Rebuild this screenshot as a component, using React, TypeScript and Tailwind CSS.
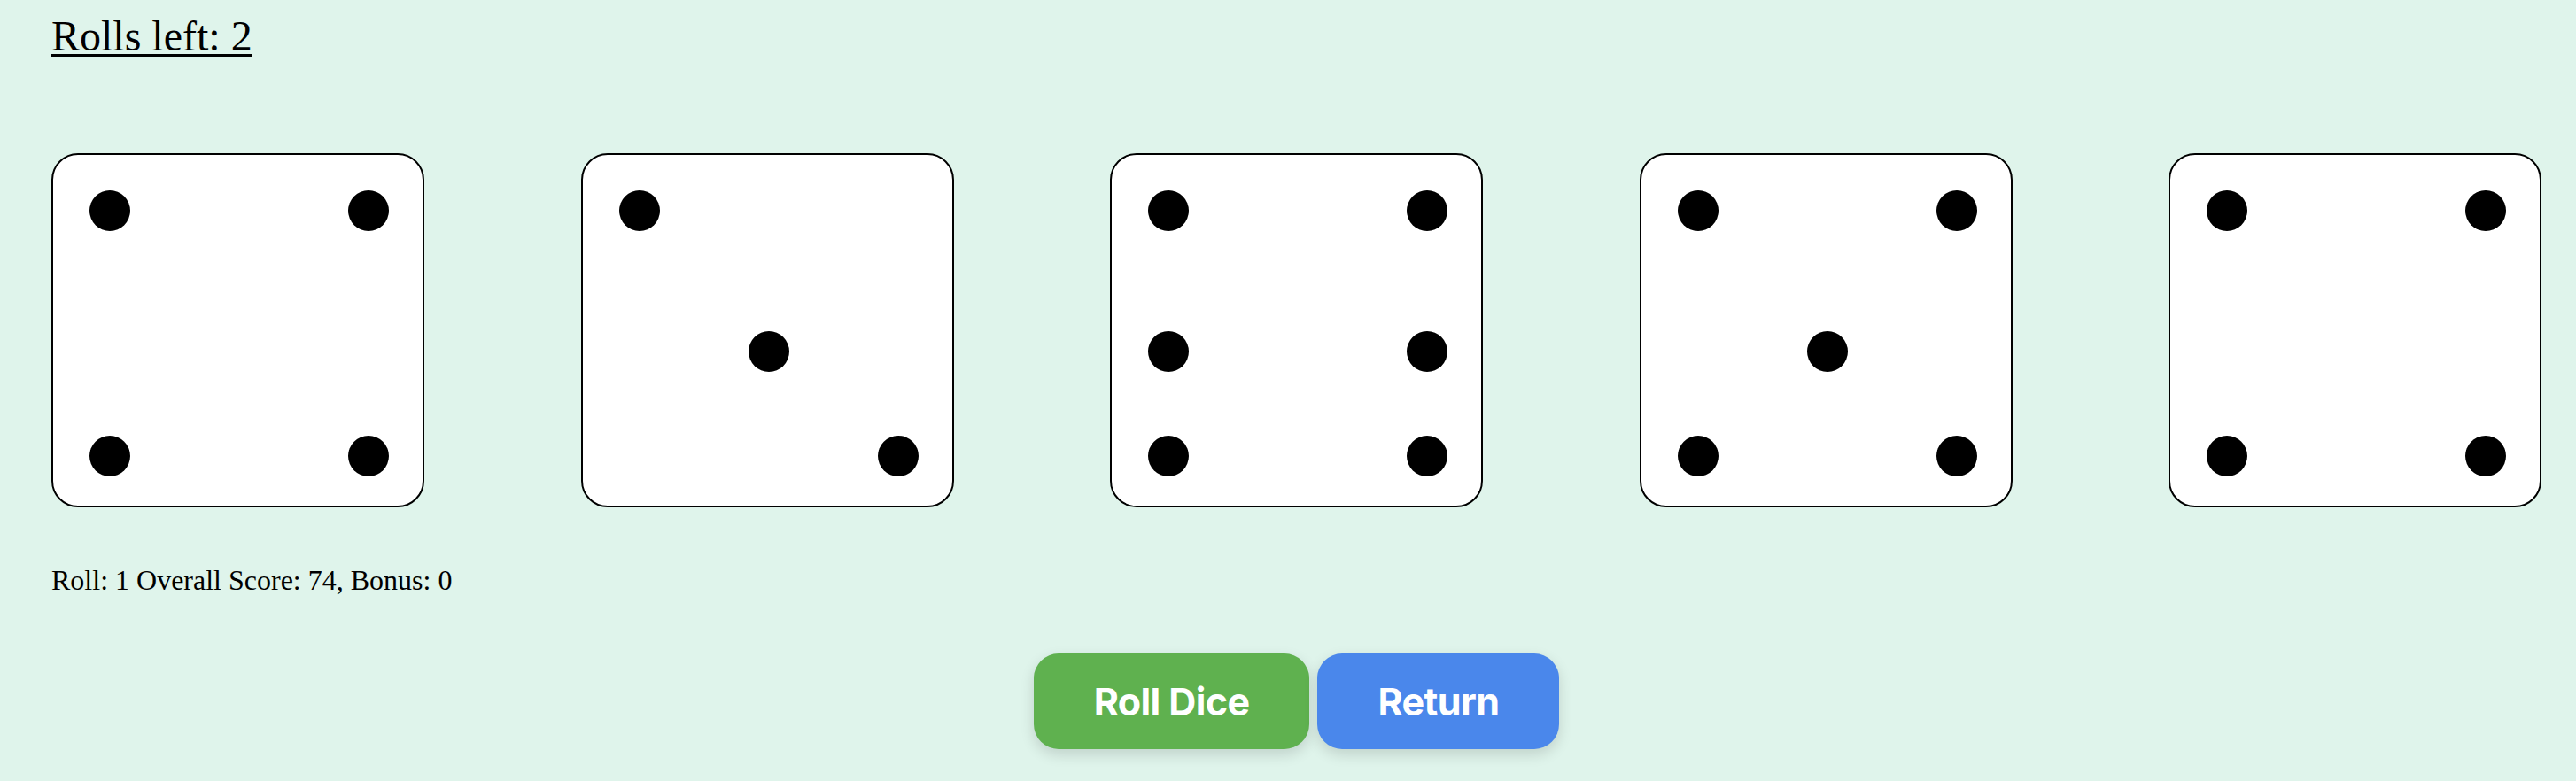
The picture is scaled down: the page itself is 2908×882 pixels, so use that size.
import React from "react";

type Slot = [boolean, boolean, boolean];
type Face = [Slot, Slot, Slot];

const FACES: Record<number, Face> = {
  3: [
    [true, false, false],
    [false, true, false],
    [false, false, true],
  ],
  4: [
    [true, false, true],
    [false, false, false],
    [true, false, true],
  ],
  5: [
    [true, false, true],
    [false, true, false],
    [true, false, true],
  ],
  6: [
    [true, false, true],
    [true, false, true],
    [true, false, true],
  ],
};

function Dot({ on }: { on: boolean }) {
  return (
    <div
      className={
        on
          ? "w-[46px] h-[46px] rounded-full bg-black"
          : "w-[46px] h-[46px]"
      }
    />
  );
}

function Row({ slots, className }: { slots: Slot; className: string }) {
  return (
    <div className={"flex h-[46px] justify-between " + className}>
      <Dot on={slots[0]} />
      <Dot on={slots[1]} />
      <Dot on={slots[2]} />
    </div>
  );
}

function Die({ value }: { value: number }) {
  const f = FACES[value];
  return (
    <div className="w-[421px] h-[400px] box-border border-2 border-black rounded-[30px] bg-white flex flex-col pt-[40px] pb-[33px] pl-[41px] pr-[38px]">
      <Row slots={f[0]} className="" />
      <Row slots={f[1]} className="mt-[113px]" />
      <Row slots={f[2]} className="mt-[72px]" />
    </div>
  );
}

export default function App() {
  const dice = [4, 3, 6, 5, 4];
  return (
    <div
      className="w-[2908px] h-[882px] bg-[#dff4eb] text-black pl-[58px] pr-[39px] overflow-hidden"
      style={{ fontFamily: '"Liberation Serif", "Times New Roman", serif' }}
    >
      <h2 className="mt-[13px] text-[48px] leading-[55px] underline decoration-[3px] underline-offset-[4px]">
        Rolls left: 2
      </h2>
      <div className="mt-[105px] flex justify-between">
        {dice.map((d, i) => (
          <Die key={i} value={d} />
        ))}
      </div>
      <p className="mt-[64px] text-[32px] leading-[37px]">
        Roll: 1 Overall Score: 74, Bonus: 0
      </p>
      <div
        className="mt-[64px] flex justify-center gap-[9px]"
        style={{ fontFamily: "Inter, 'Noto Sans', sans-serif" }}
      >
        <button className="h-[108px] px-[68px] rounded-[28px] bg-[#5fb14f] text-white text-[43px] font-bold tracking-[-0.6px] shadow-[0_6px_16px_rgba(0,0,0,0.14)]">
          Roll Dice
        </button>
        <button className="h-[108px] px-[68px] rounded-[28px] bg-[#4a87eb] text-white text-[43px] font-bold tracking-[-0.6px] shadow-[0_6px_16px_rgba(0,0,0,0.14)]">
          Return
        </button>
      </div>
    </div>
  );
}
